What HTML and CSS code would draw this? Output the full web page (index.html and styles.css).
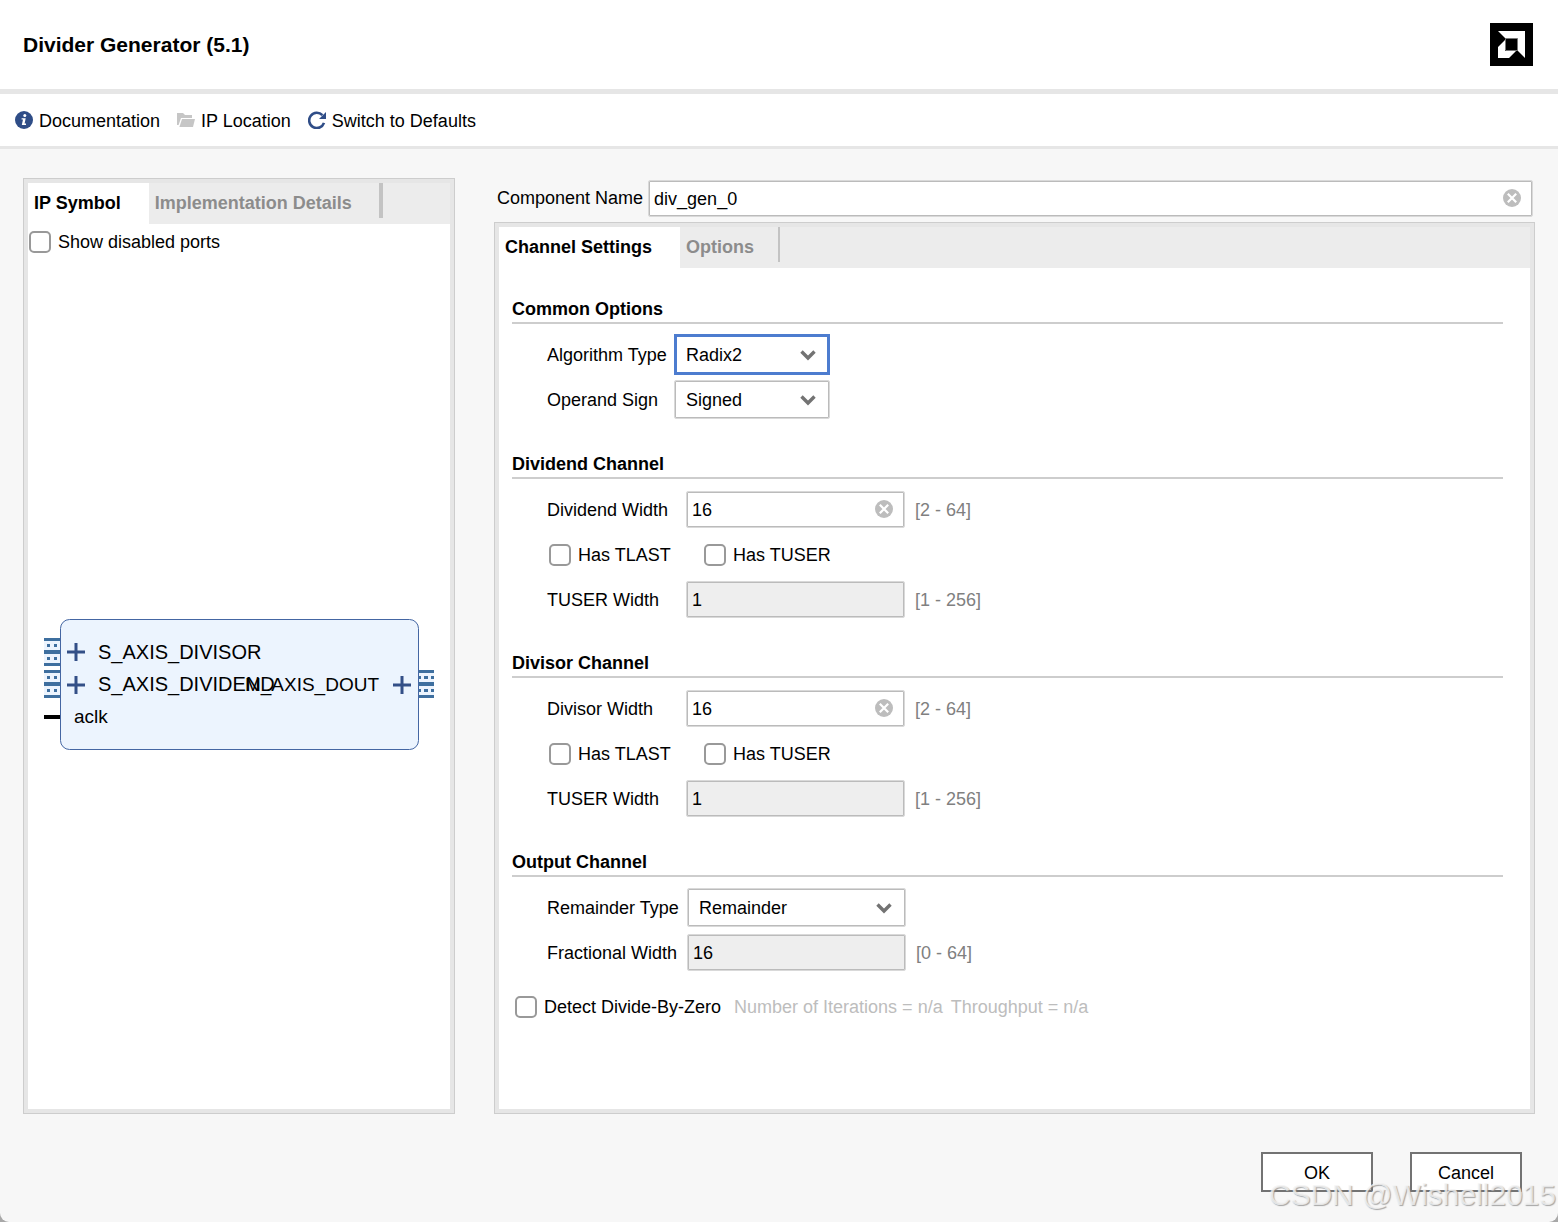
FILE: index.html
```html
<!DOCTYPE html>
<html lang="en">
<head>
  <meta charset="UTF-8" />
  <meta name="viewport" content="width=device-width, initial-scale=1.0"/>
  <title>Divider Generator (5.1)</title>
  <link rel="stylesheet" href="styles.css">
</head>
<body>

<!-- shared icons -->
<svg class="sprite" aria-hidden="true">
  <symbol id="icon-chevron" viewBox="0 0 16 12">
    <path d="M1.5 2.5 L8 9 L14.5 2.5" fill="none" stroke="#737373" stroke-width="3.4"/>
  </symbol>
  <symbol id="icon-clear" viewBox="0 0 18 18">
    <circle cx="9" cy="9" r="9" fill="#bdbdbd"/>
    <path d="M4.8 4.8 L13.2 13.2 M13.2 4.8 L4.8 13.2" stroke="#fff" stroke-width="2.2"/>
  </symbol>
</svg>

<div class="window">
  <header class="header">
    <h1>Divider Generator (5.1)</h1>
    <svg class="logo" viewBox="0 0 43 43" role="img" aria-label="AMD">
      <rect width="43" height="43" fill="#000"/>
      <path d="M8 8 H35 V35 L27 27 V16 H16 Z" fill="#fff"/>
      <path d="M15 17 V28 H26 L19 35 H8 V24 Z" fill="#fff"/>
      <path d="M15.5 27.5 V15.5 H27.5 V27.5 Z" fill="#000" stroke="#777"/>
    </svg>
  </header>

  <nav class="toolbar">
    <button class="tool">
      <svg width="18" height="18" viewBox="0 0 18 18">
        <circle cx="9" cy="9" r="9" fill="#2f4d87"/>
        <circle cx="9.8" cy="4.6" r="1.5" fill="#fff"/>
        <path d="M6.6 7.2 H10.7 L9.6 12.6 H11 V14 H6.8 L8 8.5 H6.6 Z" fill="#fff"/>
      </svg>
      <span>Documentation</span>
    </button>
    <button class="tool">
      <svg width="18" height="18" viewBox="0 0 18 18">
        <path d="M0 2 H6 L8 4 H15 V7 H4 L1.6 14 H0 Z" fill="#c6c6c6"/>
        <path d="M5 8 H18 L16 16 H2.4 Z" fill="#c6c6c6"/>
      </svg>
      <span>IP Location</span>
    </button>
    <button class="tool">
      <svg width="18" height="18" viewBox="0 0 18 18">
        <path d="M14.4 4.2 A7.6 7.6 0 1 0 16 11.8" fill="none" stroke="#2f4d87" stroke-width="2.6"/>
        <path d="M18 1 V8 H11 Z" fill="#2f4d87"/>
      </svg>
      <span>Switch to Defaults</span>
    </button>
  </nav>

  <main class="main">
    <section class="panel symbol-panel">
      <div class="tabs">
        <button class="tab active">IP Symbol</button>
        <button class="tab tab-wide">Implementation Details</button>
      </div>
      <label class="check ports"><input type="checkbox"> Show disabled ports</label>
      <div class="symbol">
        <svg width="390" height="131" viewBox="0 0 390 131">
          <defs>
            <g id="bus">
              <rect width="16" height="28" fill="#ecf4fe"/>
              <path d="M0 0 H16 V3 H0 Z M0 12 H16 V16 H0 Z M0 25 H16 V28 H0 Z" fill="#3e6f9f"/>
            </g>
            <path id="dots-in" d="M3 6 h3 v3 h-3 Z M10 6 h3 v3 h-3 Z M3 19 h3 v3 h-3 Z M10 19 h3 v3 h-3 Z" fill="#3e6f9f"/>
            <path id="dots-out" d="M1 6 h2 v3 h-2 Z M6 6 h4 v3 h-4 Z M13 6 h3 v3 h-3 Z M1 19 h2 v3 h-2 Z M6 19 h4 v3 h-4 Z M13 19 h3 v3 h-3 Z" fill="#3e6f9f"/>
            <path id="plus" d="M0 9 H18 M9 0 V18" stroke="#334f87" stroke-width="3"/>
          </defs>
          <use href="#bus" x="0" y="19"/>
          <use href="#dots-in" x="0" y="19"/>
          <use href="#bus" x="0" y="51"/>
          <use href="#dots-in" x="0" y="51"/>
          <use href="#bus" x="374" y="51"/>
          <use href="#dots-out" x="374" y="51"/>
          <rect y="96" width="16" height="4" fill="#000"/>
          <rect x="16.5" y="0.5" width="358" height="130" rx="9" fill="#ecf4fe" stroke="#4466a3"/>
          <use href="#plus" x="23" y="24"/>
          <use href="#plus" x="23" y="57"/>
          <use href="#plus" x="349" y="57"/>
          <text x="54" y="40">S_AXIS_DIVISOR</text>
          <text x="54" y="72">S_AXIS_DIVIDEND</text>
          <text class="small" x="335" y="72" text-anchor="end">M_AXIS_DOUT</text>
          <text class="small" x="30" y="104">aclk</text>
        </svg>
      </div>
    </section>

    <div class="config">
      <div class="component">
        <label for="component-name">Component Name</label>
        <div class="field">
          <input type="text" id="component-name" value="div_gen_0">
          <button class="clear" aria-label="Clear"><svg><use href="#icon-clear"/></svg></button>
        </div>
      </div>

      <section class="panel">
        <div class="tabs">
          <button class="tab active">Channel Settings</button>
          <button class="tab">Options</button>
        </div>

        <form class="settings">
          <fieldset class="group group-common">
            <h2>Common Options</h2>
            <div class="row">
              <label for="algorithm">Algorithm Type</label>
              <div class="field combo focused">
                <select id="algorithm"><option>Radix2</option><option>High Radix</option></select>
                <svg><use href="#icon-chevron"/></svg>
              </div>
            </div>
            <div class="row">
              <label for="sign">Operand Sign</label>
              <div class="field combo">
                <select id="sign"><option>Signed</option><option>Unsigned</option></select>
                <svg><use href="#icon-chevron"/></svg>
              </div>
            </div>
          </fieldset>

          <fieldset class="group">
            <h2>Dividend Channel</h2>
            <div class="row">
              <label for="dividend-width">Dividend Width</label>
              <div class="field">
                <input type="text" id="dividend-width" value="16">
                <button type="button" class="clear" aria-label="Clear"><svg><use href="#icon-clear"/></svg></button>
              </div>
              <span class="range">[2 - 64]</span>
            </div>
            <div class="row checks">
              <label class="check"><input type="checkbox"> Has TLAST</label>
              <label class="check"><input type="checkbox"> Has TUSER</label>
            </div>
            <div class="row">
              <label for="dividend-tuser">TUSER Width</label>
              <div class="field"><input type="text" id="dividend-tuser" value="1" disabled></div>
              <span class="range">[1 - 256]</span>
            </div>
          </fieldset>

          <fieldset class="group">
            <h2>Divisor Channel</h2>
            <div class="row">
              <label for="divisor-width">Divisor Width</label>
              <div class="field">
                <input type="text" id="divisor-width" value="16">
                <button type="button" class="clear" aria-label="Clear"><svg><use href="#icon-clear"/></svg></button>
              </div>
              <span class="range">[2 - 64]</span>
            </div>
            <div class="row checks">
              <label class="check"><input type="checkbox"> Has TLAST</label>
              <label class="check"><input type="checkbox"> Has TUSER</label>
            </div>
            <div class="row">
              <label for="divisor-tuser">TUSER Width</label>
              <div class="field"><input type="text" id="divisor-tuser" value="1" disabled></div>
              <span class="range">[1 - 256]</span>
            </div>
          </fieldset>

          <fieldset class="group group-output">
            <h2>Output Channel</h2>
            <div class="row">
              <label for="remainder">Remainder Type</label>
              <div class="field combo">
                <select id="remainder"><option>Remainder</option><option>Fractional</option></select>
                <svg><use href="#icon-chevron"/></svg>
              </div>
            </div>
            <div class="row">
              <label for="fractional">Fractional Width</label>
              <div class="field"><input type="text" id="fractional" value="16" disabled></div>
              <span class="range">[0 - 64]</span>
            </div>
          </fieldset>

          <div class="summary">
            <label class="check"><input type="checkbox"> Detect Divide-By-Zero</label>
            <span class="notes"><span>Number of Iterations = n/a</span><span>Throughput = n/a</span></span>
          </div>
        </form>
      </section>
    </div>
  </main>

  <footer class="footer">
    <button class="btn">OK</button>
    <button class="btn">Cancel</button>
  </footer>
  <div class="watermark">CSDN @Wishell2015</div>
</div>

</body>
</html>
```
FILE: styles.css
```css
* {
  box-sizing: border-box;
}

html {
  background: #a8a8a8;
}

body {
  margin: 0;
  color: #000;
  font-family: "Liberation Sans", Arial, sans-serif;
  font-size: 18px;
  line-height: 22px;
}

button,
input,
select {
  font: inherit;
  color: inherit;
}

button {
  padding: 0;
  border: none;
  background: none;
  cursor: pointer;
}

.sprite {
  display: none;
}

.window {
  position: relative;
  min-height: 100vh;
  display: flex;
  flex-direction: column;
  overflow: hidden;
  background: #f7f7f7;
  border-radius: 0 0 9px 9px;
}

.header {
  display: flex;
  justify-content: space-between;
  align-items: center;
  height: 94px;
  padding: 0 25px 0 23px;
  background: #fff;
  border-bottom: 5px solid #e6e6e6;
}

.header h1 {
  margin: 0;
  font-size: 21px;
}

.logo {
  width: 43px;
  height: 43px;
}

.toolbar {
  display: flex;
  align-items: center;
  gap: 17px;
  height: 55px;
  padding: 0 15px;
  background: #fff;
  border-bottom: 3px solid #e6e6e6;
}

.tool {
  display: flex;
  align-items: center;
  gap: 6px;
}

.tool span {
  padding-top: 2px;
}

.main {
  flex: 1;
  display: flex;
  gap: 39px;
  padding: 29px 23px 0;
}

.panel {
  display: flex;
  flex-direction: column;
  background: #fff;
  border: 1px solid #cdcdcd;
  box-shadow: inset 0 0 0 4px #e6e6e6;
  padding: 4px;
}

.symbol-panel {
  flex: 0 0 432px;
}

.tabs {
  display: flex;
  height: 41px;
  background: #ececec;
}

.tab {
  height: 35px;
  padding: 4px 24px 0 6px;
  color: #8c8c8c;
  font-weight: bold;
  text-align: left;
  border-right: 2px solid #c3c3c3;
}

.tab-wide {
  padding-right: 27px;
  border-right-width: 4px;
}

.tab.active {
  height: 41px;
  padding: 0 28px 2px 6px;
  color: #000;
  background: #fff;
  border-right: none;
}

.check {
  display: flex;
  align-items: center;
  gap: 7px;
}

.check input {
  appearance: none;
  width: 22px;
  height: 22px;
  margin: 0;
  background: #fff;
  border: 2px solid #999;
  border-radius: 5px;
}

.ports {
  padding: 7px 1px;
}

.symbol {
  flex: 1;
  display: flex;
  justify-content: center;
  align-items: center;
}

.symbol text {
  font-size: 20px;
}

.symbol .small {
  font-size: 19px;
}

.config {
  flex: 1;
  display: flex;
  flex-direction: column;
}

.config .panel {
  flex: 1;
}

.component {
  display: flex;
  align-items: center;
  gap: 5px;
  height: 44px;
  padding: 0 2px 4px 3px;
}

.component .field {
  flex: 1;
}

.field {
  position: relative;
}

/* thin grey line with a softer one around it */
.field input,
.field select {
  display: block;
  width: 100%;
  height: 37px;
  padding: 2px 4px 0;
  background: #fff;
  border: 1px solid #d9d9d9;
  border-radius: 2px;
  box-shadow: inset 0 0 0 1px #bbb;
  outline: none;
}

.field input {
  padding-left: 5px;
}

.field input:disabled {
  color: #000;
  background: #eee;
}

.field select {
  appearance: none;
  height: 39px;
  padding: 0 11px;
}

.field.focused select {
  height: 41px;
  padding: 0 9px;
  border: 3px solid #4d7ccf;
  border-radius: 0;
  box-shadow: none;
}

.combo svg {
  position: absolute;
  top: 50%;
  right: 14px;
  width: 16px;
  height: 12px;
  margin-top: -6px;
  pointer-events: none;
}

.clear {
  position: absolute;
  top: 9px;
  right: 12px;
  width: 18px;
  height: 18px;
}

.clear svg {
  display: block;
  width: 18px;
  height: 18px;
}

.settings {
  padding: 28px 27px 0 13px;
}

.group {
  min-width: 0;
  margin: 0 0 28px;
  padding: 0;
  border: none;
}

.group h2 {
  height: 28px;
  margin: 0 0 8px;
  padding-top: 2px;
  font-size: 18px;
  border-bottom: 2px solid #cdcdcd;
}

.row {
  display: flex;
  align-items: center;
  height: 45px;
  padding-left: 35px;
}

.row > label:first-child:not(.check) {
  width: 139px;
}

.row .field {
  width: 219px;
}

.group-common {
  margin-bottom: 29px;
}

.group-common .row > label:first-child:not(.check) {
  width: 127px;
}

.group-common .field {
  width: 156px;
}

.range {
  margin-left: 10px;
  color: #808080;
}

.checks {
  padding-left: 37px;
}

.checks .check {
  width: 155px;
}

.group-output {
  margin-bottom: 9px;
}

.group-output .row > label:first-child:not(.check) {
  width: 140px;
}

.summary {
  display: flex;
  align-items: center;
  gap: 13px;
  height: 45px;
  padding-left: 3px;
}

.notes {
  display: flex;
  gap: 8px;
  color: #bdbdbd;
}

.footer {
  display: flex;
  justify-content: flex-end;
  gap: 37px;
  padding: 38px 36px 30px;
}

.btn {
  width: 112px;
  height: 40px;
  padding-top: 2px;
  background: #fff;
  border: 2px solid #737373;
}

.watermark {
  position: absolute;
  right: 2px;
  bottom: 10px;
  color: rgba(245, 245, 245, 0.8);
  font-size: 30px;
  line-height: 34px;
  white-space: nowrap;
  text-shadow: 1px 1px 1px rgba(130, 130, 130, 0.7);
  pointer-events: none;
}
```
